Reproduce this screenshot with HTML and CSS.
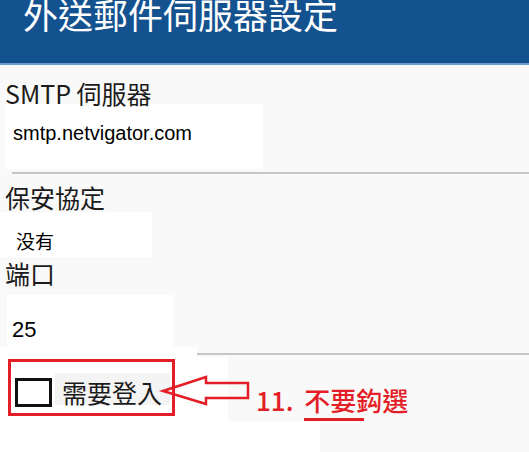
FILE: index.html
```html
<!DOCTYPE html>
<html lang="zh-Hant">
<head>
<meta charset="utf-8">
<title>外送郵件伺服器設定</title>
<link rel="stylesheet" href="styles.css">
</head>
<body>
<header class="appbar">
  <h1 class="appbar-title">外送郵件伺服器設定</h1>
</header>
<main class="form">
  <div class="field-label label-smtp">SMTP 伺服器</div>
  <div class="input input-server">smtp.netvigator.com</div>
  <div class="divider divider-server"></div>

  <div class="field-label label-security">保安協定</div>
  <div class="input input-security">没有</div>

  <div class="field-label label-port">端口</div>
  <div class="input input-port">25</div>

  <div class="gap-row">
    <div class="gap-white"></div>
    <div class="gap-line"></div>
  </div>

  <section class="login-area">
    <div class="login-white">
      <div class="login-option">
        <span class="checkbox"></span>
        <span class="option-text">需要登入</span>
      </div>
    </div>
    <div class="login-bottom"></div>

    <svg class="arrow" viewBox="0 0 92 34" width="92" height="34">
      <polygon points="3,18 46,4 46,10 88,10 88,25 46,25 46,31" fill="none" stroke="#e41e26" stroke-width="2.5" stroke-linejoin="miter"/>
    </svg>
    <div class="note">11. <span class="note-emph">不要</span>鈎選</div>
  </section>
</main>
</body>
</html>
```
FILE: styles.css
```css
* {
  box-sizing: border-box;
}

html,
body {
  margin: 0;
  padding: 0;
}

body {
  width: 529px;
  height: 452px;
  overflow: hidden;
  background: #f9f9f9;
  color: #1b1b1b;
  font-family: "Noto Sans CJK TC", "Noto Sans CJK SC", sans-serif;
}

.appbar {
  height: 65px;
  background: #14528f;
  border-bottom: 2px solid #6d9dd0;
  padding-left: 23px;
  overflow: hidden;
}

.appbar-title {
  margin: -4px 0 0;
  font-size: 35px;
  line-height: 36px;
  font-weight: 400;
  color: #ffffff;
  white-space: nowrap;
}

.field-label {
  font-size: 25px;
  line-height: 24px;
  padding-left: 5px;
  white-space: nowrap;
}

.label-smtp {
  margin-top: 16px;
}

.input {
  background: #ffffff;
  color: #000000;
  white-space: nowrap;
}

.input-server {
  margin: -1px 0 0 5px;
  width: 258px;
  height: 65px;
  padding: 17px 0 0 8px;
  font-family: "Liberation Sans", Arial, sans-serif;
  font-size: 20px;
  line-height: 24px;
}

.divider {
  height: 2px;
  background: #c6c6c6;
}

.divider-server {
  margin: 3px 0 0 12px;
}

.label-security {
  margin-top: 11px;
}

.input-security {
  margin-top: 3px;
  width: 152px;
  height: 45px;
  padding: 19px 0 0 16px;
  font-size: 19px;
  line-height: 19px;
}

.label-port {
  margin-top: 4px;
}

.input-port {
  margin: 10px 0 0 7px;
  width: 166px;
  height: 52px;
  padding: 23px 0 0 5px;
  font-family: "Liberation Sans", Arial, sans-serif;
  font-size: 22px;
  line-height: 24px;
}

.gap-row {
  display: flex;
  height: 10px;
}

.gap-white {
  width: 197px;
  background: #ffffff;
}

.gap-line {
  flex: 1;
  height: 2px;
  margin-top: 6px;
  background: #c6c6c6;
}

.login-area {
  position: relative;
  height: 95px;
}

.login-white {
  width: 228px;
  height: 65px;
  background: #ffffff;
  padding: 2px 0 0 8px;
}

.login-option {
  display: flex;
  align-items: flex-start;
  width: 167px;
  height: 57px;
  border: 3px solid #e41e26;
  padding-left: 4px;
}

.checkbox {
  margin-top: 16px;
  width: 37px;
  height: 29px;
  border: 3px solid #111111;
  background: #ffffff;
  flex: none;
}

.option-text {
  margin: 11px 0 0 3px;
  width: 115px;
  height: 32px;
  padding: 6px 0 0 7px;
  background: #f4f4f4;
  font-size: 25px;
  line-height: 26px;
  color: #1b1b1b;
  white-space: nowrap;
}

.login-bottom {
  width: 320px;
  height: 30px;
  background: #ffffff;
}

.arrow {
  position: absolute;
  left: 160px;
  top: 16px;
  overflow: visible;
}

.note {
  position: absolute;
  left: 256px;
  top: 30px;
  font-size: 26px;
  line-height: 26px;
  font-weight: 500;
  color: #e41e26;
  white-space: nowrap;
}

.note-emph {
  margin-left: 5px;
  border-bottom: 3px solid #e41e26;
  padding-right: 8px;
  margin-right: -8px;
}
```
